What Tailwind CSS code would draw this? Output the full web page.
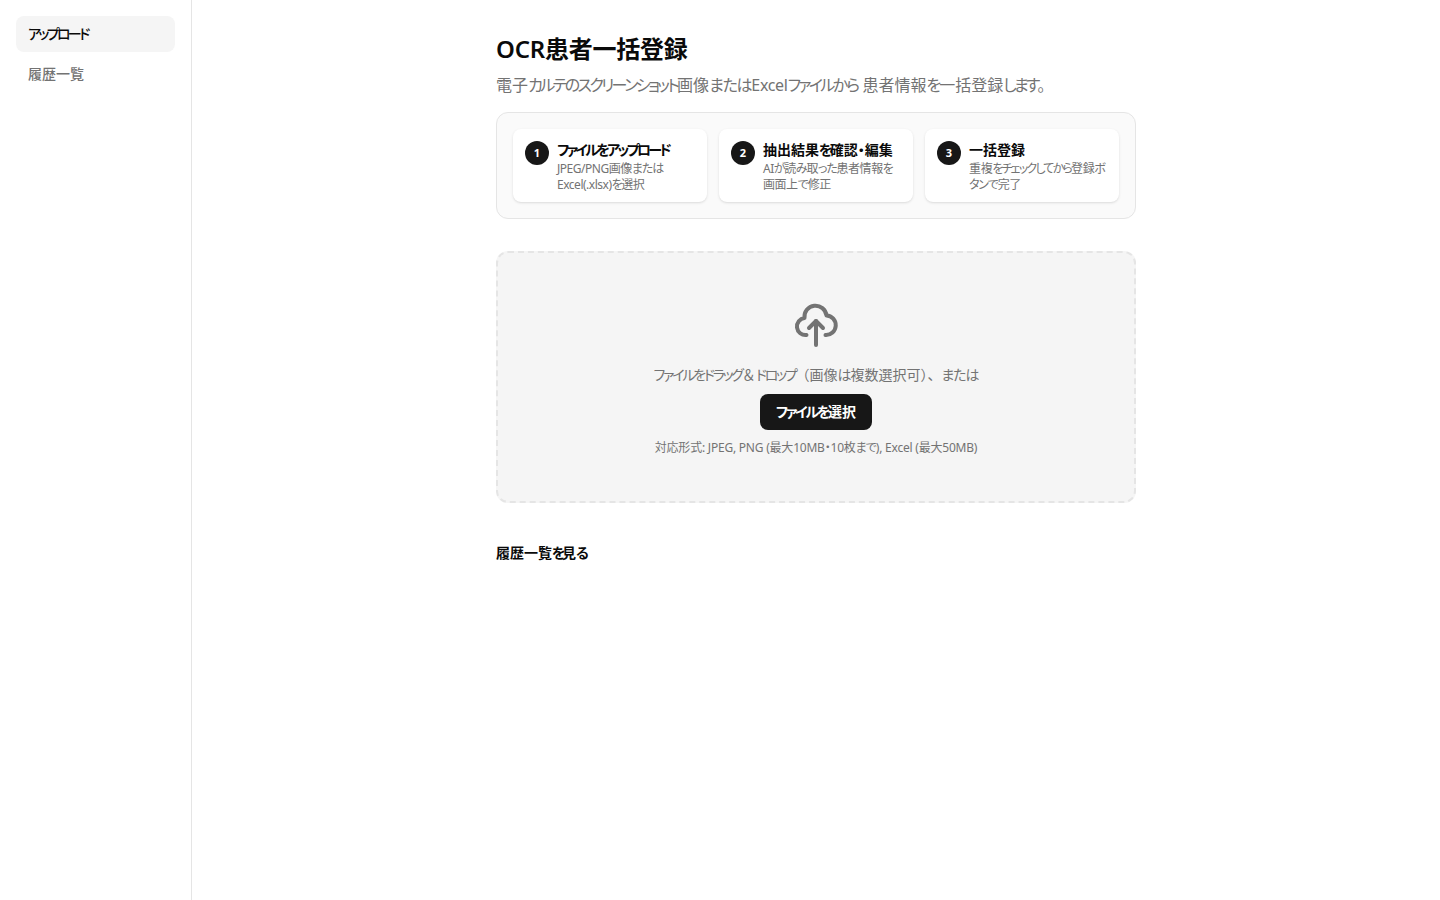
<!DOCTYPE html>
<html lang="ja">
<head>
<meta charset="utf-8">
<title>OCR患者一括登録</title>
<script src="https://cdn.jsdelivr.net/npm/@tailwindcss/browser@4"></script>
</head>
<body class="bg-white font-['Noto_Sans','Noto_Sans_CJK_JP',sans-serif] text-[#0a0a0a]">
<div class="flex min-h-[900px]">
  <aside class="w-[192px] shrink-0 border-r border-[#e5e5e5] p-4">
    <nav class="flex flex-col gap-1">
      <a class="flex h-9 items-center rounded-lg bg-[#f5f5f5] px-3 text-sm font-medium text-[#0a0a0a]"><span class="[font-feature-settings:'palt'] tracking-[-0.19em]">アップロード</span></a>
      <a class="flex h-9 items-center rounded-lg px-3 text-sm font-medium text-[#737373]">履歴一覧</a>
    </nav>
  </aside>
  <main class="flex-1">
    <div class="mx-auto w-[640px] pt-[33px]">
      <h1 class="text-2xl font-semibold leading-8 tracking-[-0.01em]">OCR患者一括登録</h1>
      <p class="mt-2 text-base leading-6 text-[#737373]">電子<span class="[font-feature-settings:'palt'] tracking-[-0.16em]">カルテのスクリーンショット</span>画像<span class="[font-feature-settings:'palt'] tracking-[-0.08em]">または</span><span class="tracking-[-0.02em]">Excel</span><span class="[font-feature-settings:'palt'] tracking-[-0.16em]">ファイル</span><span class="[font-feature-settings:'palt'] tracking-[-0.12em]">から</span> 患者情報<span class="[font-feature-settings:'palt'] tracking-[-0.12em]">を</span>一括登録<span class="[font-feature-settings:'palt'] tracking-[-0.18em]">します</span>。</p>
      <section class="mt-[15px] grid grid-cols-3 gap-3 rounded-xl border border-[#e5e5e5] bg-[#fafafa] p-4">
        <div class="flex gap-2 rounded-lg bg-white px-3 pt-3 pb-[9px] shadow-sm">
          <span class="flex size-6 shrink-0 items-center justify-center rounded-full bg-[#171717] pt-px text-[11px] font-bold text-white">1</span>
          <div class="min-w-0"><p class="text-sm font-semibold leading-[18px]"><span class="[font-feature-settings:'palt'] tracking-[-0.19em]">ファイルをアップロード</span></p><p class="mt-[2px] text-xs leading-4 tracking-[-0.04em] text-[#737373]">JPEG/PNG画像<span class="[font-feature-settings:'palt'] tracking-[-0.08em]">または</span><br>Excel(.xlsx)<span class="[font-feature-settings:'palt'] tracking-[-0.12em]">を</span>選択</p></div>
        </div>
        <div class="flex gap-2 rounded-lg bg-white px-3 pt-3 pb-[9px] shadow-sm">
          <span class="flex size-6 shrink-0 items-center justify-center rounded-full bg-[#171717] pt-px text-[11px] font-bold text-white">2</span>
          <div class="min-w-0"><p class="text-sm font-semibold leading-[18px]">抽出結果<span class="[font-feature-settings:'palt'] tracking-[-0.2em]">を</span>確認<span class="[font-feature-settings:'palt']">・</span>編集</p><p class="mt-[2px] text-xs leading-4 tracking-[-0.04em] text-[#737373]">AI<span class="[font-feature-settings:'palt'] tracking-[-0.1em]">が</span>読<span class="[font-feature-settings:'palt'] tracking-[-0.1em]">み</span>取<span class="[font-feature-settings:'palt'] tracking-[-0.1em]">った</span>患者情報<span class="[font-feature-settings:'palt'] tracking-[-0.1em]">を</span><br>画面上<span class="[font-feature-settings:'palt'] tracking-[-0.08em]">で</span>修正</p></div>
        </div>
        <div class="flex gap-2 rounded-lg bg-white px-3 pt-3 pb-[9px] shadow-sm">
          <span class="flex size-6 shrink-0 items-center justify-center rounded-full bg-[#171717] pt-px text-[11px] font-bold text-white">3</span>
          <div class="min-w-0"><p class="text-sm font-semibold leading-[18px]">一括登録</p><p class="mt-[2px] whitespace-nowrap text-xs leading-4 tracking-[-0.03em] text-[#737373]">重複<span class="[font-feature-settings:'palt'] tracking-[-0.15em]">をチェックしてから</span>登録<span class="[font-feature-settings:'palt']">ボ</span><br><span class="[font-feature-settings:'palt'] tracking-[-0.1em]">タンで</span>完了</p></div>
        </div>
      </section>
      <section class="mt-8 flex flex-col items-center rounded-xl border-2 border-dashed border-[#e5e5e5] bg-[#f5f5f5] pt-12 pb-[45px]">
        <svg xmlns="http://www.w3.org/2000/svg" width="48" height="48" viewBox="0 -1 48 48" fill="none" stroke="#737373" stroke-width="4" stroke-linecap="round" stroke-linejoin="round"><path d="M24 43V19"/><path d="m17 26 7-7 7 7"/><path d="M14.5 33A8.5 8.5 0 0 1 12.5 16A11 11 0 0 1 34.5 13.5A9.3 9.3 0 0 1 33.5 33"/></svg>
        <p class="mt-4 text-sm leading-5 text-[#737373]"><span class="[font-feature-settings:'palt'] tracking-[-0.16em]">ファイルをドラッグ</span>＆<span class="[font-feature-settings:'palt'] tracking-[-0.16em]">ドロップ</span>（画像<span class="[font-feature-settings:'palt'] tracking-[-0.08em]">は</span>複数選択可）、<span class="[font-feature-settings:'palt'] tracking-[-0.08em]">または</span></p>
        <button class="mt-[9px] h-9 rounded-lg bg-[#171717] px-4 text-sm font-semibold text-white"><span class="[font-feature-settings:'palt'] tracking-[-0.16em]">ファイルを</span>選択</button>
        <p class="mt-[10px] text-xs leading-4 tracking-[-0.018em] text-[#737373]">対応形式: JPEG, PNG (最大10MB<span class="[font-feature-settings:'palt']">・</span>10枚<span class="[font-feature-settings:'palt'] tracking-[-0.08em]">まで</span>), Excel (最大50MB)</p>
      </section>
      <a class="mt-10 block text-sm font-semibold leading-5">履歴一覧<span class="[font-feature-settings:'palt'] tracking-[-0.25em]">を</span>見<span class="[font-feature-settings:'palt'] tracking-[-0.12em]">る</span></a>
    </div>
  </main>
</div>
</body>
</html>
